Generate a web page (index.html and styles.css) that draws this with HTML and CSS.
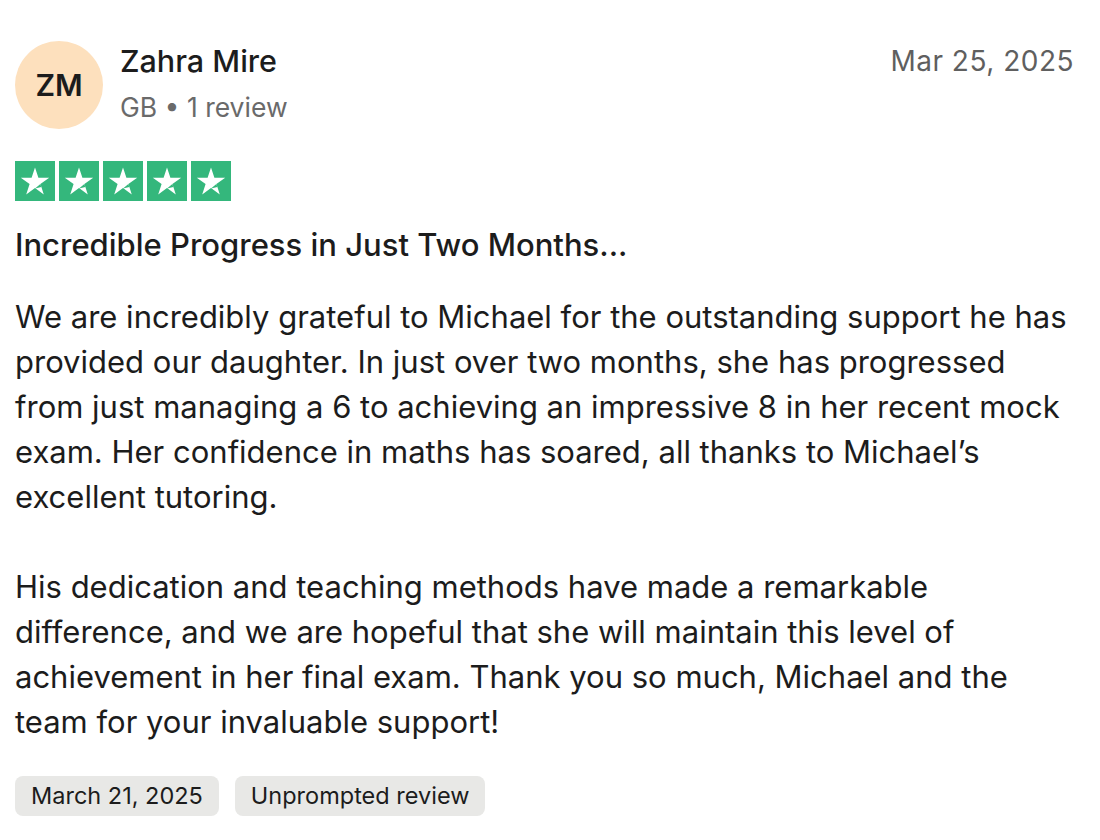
FILE: index.html
```html
<!DOCTYPE html>
<html lang="en">
<head>
<meta charset="utf-8">
<link rel="stylesheet" href="styles.css">
</head>
<body>
<article class="review">
  <header class="head">
    <div class="avatar">ZM</div>
    <div class="who">
      <div class="name">Zahra Mire</div>
      <div class="meta">GB • 1 review</div>
    </div>
    <time class="date">Mar 25, 2025</time>
  </header>
  <div class="stars">
    <span class="star"><svg viewBox="0 0 40 40"><path d="M20 6.5l3.4 10.3h10.8l-8.8 6.3 3.4 10.4-8.8-6.4-8.8 6.4 3.4-10.4-8.8-6.3h10.8z" fill="#fff"/><path d="M25.4 23.1l0.9 2.9-6.3 1.4z" fill="#34b77c"/></svg></span>
    <span class="star"><svg viewBox="0 0 40 40"><path d="M20 6.5l3.4 10.3h10.8l-8.8 6.3 3.4 10.4-8.8-6.4-8.8 6.4 3.4-10.4-8.8-6.3h10.8z" fill="#fff"/><path d="M25.4 23.1l0.9 2.9-6.3 1.4z" fill="#34b77c"/></svg></span>
    <span class="star"><svg viewBox="0 0 40 40"><path d="M20 6.5l3.4 10.3h10.8l-8.8 6.3 3.4 10.4-8.8-6.4-8.8 6.4 3.4-10.4-8.8-6.3h10.8z" fill="#fff"/><path d="M25.4 23.1l0.9 2.9-6.3 1.4z" fill="#34b77c"/></svg></span>
    <span class="star"><svg viewBox="0 0 40 40"><path d="M20 6.5l3.4 10.3h10.8l-8.8 6.3 3.4 10.4-8.8-6.4-8.8 6.4 3.4-10.4-8.8-6.3h10.8z" fill="#fff"/><path d="M25.4 23.1l0.9 2.9-6.3 1.4z" fill="#34b77c"/></svg></span>
    <span class="star"><svg viewBox="0 0 40 40"><path d="M20 6.5l3.4 10.3h10.8l-8.8 6.3 3.4 10.4-8.8-6.4-8.8 6.4 3.4-10.4-8.8-6.3h10.8z" fill="#fff"/><path d="M25.4 23.1l0.9 2.9-6.3 1.4z" fill="#34b77c"/></svg></span>
  </div>
  <h2 class="title">Incredible Progress in Just Two Months...</h2>
  <div class="body">
    <p>We are incredibly grateful to Michael for the outstanding support he has provided our daughter. In just over two months, she has progressed from just managing a 6 to achieving an impressive 8 in her recent mock exam. Her confidence in maths has soared, all thanks to Michael’s excellent tutoring.</p>
    <p>His dedication and teaching methods have made a remarkable difference, and we are hopeful that she will maintain this level of achievement in her final exam. Thank you so much, Michael and the team for your invaluable support!</p>
  </div>
  <div class="tags">
    <span class="tag">March 21, 2025</span>
    <span class="tag">Unprompted review</span>
  </div>
</article>
</body>
</html>
```

FILE: styles.css
```css
html, body {
  margin: 0;
  padding: 0;
  background: #fff;
}
body {
  font-family: "Inter", "Liberation Sans", sans-serif;
  color: #1c1c1c;
}
.review {
  padding: 41px 22px 0 15px;
}
.head {
  display: flex;
  align-items: flex-start;
}
.avatar {
  width: 88px;
  height: 88px;
  border-radius: 50%;
  background: #fde0bd;
  display: flex;
  align-items: center;
  justify-content: center;
  font-size: 30px;
  font-weight: 600;
  color: #1c1c1c;
  flex: none;
}
.who {
  margin-left: 17px;
  flex: 1;
}
.name {
  font-size: 30.5px;
  font-weight: 500;
  line-height: 40px;
  margin-top: 0;
}
.meta {
  font-size: 26.5px;
  color: #6a6a6a;
  line-height: 40px;
  margin-top: 6px;
}
.date {
  font-size: 28px;
  color: #5f5f5f;
  line-height: 40px;
  margin-top: 0;
  margin-right: 4px;
  letter-spacing: 0.5px;
}
.stars {
  display: flex;
  gap: 4px;
  margin-top: 32px;
}
.star {
  width: 40px;
  height: 40px;
  background: #34b77c;
  display: block;
}
.star svg {
  width: 40px;
  height: 40px;
  display: block;
}
.title {
  font-size: 31px;
  font-weight: 500;
  line-height: 40px;
  margin: 24px 0 0;
}
.body {
  margin-top: 29px;
  font-size: 31px;
  line-height: 45px;
  max-width: 1063px;
}
.body p {
  margin: 0 0 45px;
}
.body p:last-child {
  margin-bottom: 0;
}
.tags {
  display: flex;
  gap: 16px;
  margin-top: 32px;
}
.tag {
  background: #e8e8e6;
  border-radius: 8px;
  height: 40px;
  line-height: 40px;
  padding: 0 16px;
  font-size: 23.5px;
  color: #1c1c1c;
}
```
